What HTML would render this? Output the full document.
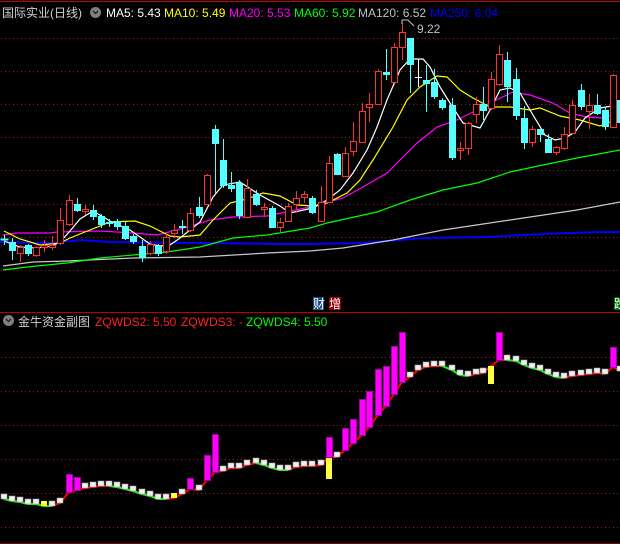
<!DOCTYPE html>
<html><head><meta charset="utf-8"><style>
html,body{margin:0;padding:0;background:#000;width:620px;height:544px;overflow:hidden}
svg{display:block}
text{font-family:"Liberation Sans","Noto Sans CJK SC",sans-serif;font-size:12px}
</style></head><body>
<svg width="620" height="544" viewBox="0 0 620 544" xmlns="http://www.w3.org/2000/svg">
<rect width="620" height="544" fill="#000"/>
<!-- frame lines -->
<line x1="0" y1="1.5" x2="620" y2="1.5" stroke="#c00000" stroke-width="1"/>
<line x1="23.5" y1="0" x2="23.5" y2="2" stroke="#c00000"/>
<line x1="0" y1="312.5" x2="620" y2="312.5" stroke="#c00000"/>
<line x1="0" y1="543.5" x2="620" y2="543.5" stroke="#800000"/>
<!-- grid -->
<g stroke="#a02020" stroke-width="1" stroke-dasharray="1 3">
<line x1="1" y1="38.5" x2="620" y2="38.5"/><line x1="1" y1="71.5" x2="620" y2="71.5"/>
<line x1="1" y1="104.5" x2="620" y2="104.5"/><line x1="1" y1="137.5" x2="620" y2="137.5"/>
<line x1="1" y1="170.5" x2="620" y2="170.5"/><line x1="1" y1="204.5" x2="620" y2="204.5"/>
<line x1="1" y1="237.5" x2="620" y2="237.5"/><line x1="1" y1="270.5" x2="620" y2="270.5"/>
<line x1="1" y1="357.5" x2="620" y2="357.5"/><line x1="1" y1="391.5" x2="620" y2="391.5"/>
<line x1="1" y1="425.5" x2="620" y2="425.5"/><line x1="1" y1="459.5" x2="620" y2="459.5"/>
<line x1="1" y1="493.5" x2="620" y2="493.5"/><line x1="1" y1="527.5" x2="620" y2="527.5"/>
</g>
<!-- moving averages -->
<g fill="none" stroke-width="1.2">
<polyline stroke="#0000ff" stroke-width="2" points="0,242 53,243 80,240 110,242 283,244 310,244 363,243 423,238 487,237 543,234 600,232 620,232"/>
<polyline stroke="#c8c8c8" points="3,266 33,262 67,261 133,258 200,257 267,253 310,251 343,248 393,240 443,230 510,220 577,210 620,202"/>
<polyline stroke="#00ff00" points="3,270 27,267 67,263 100,258 133,255 167,252 200,247 233,238 267,235 310,228 327,223 377,212 410,200 443,190 477,183 510,172 543,165 577,158 620,150"/>
<polyline stroke="#ff00ff" points="3,235 17,233 50,233 57,232 100,231 133,233 157,235 177,230 210,220 233,217 267,216 310,207 343,198 363,187 387,173 400,160 417,143 437,127 457,120 477,110 490,103 513,92 530,95 553,103 570,113 587,117 603,118 620,112"/>
<polyline stroke="#ffff00" points="4,231 20,239 40,245 60,243 70,238 90,230 110,222 135,221 150,226 170,236 180,237 200,235 213,220 230,203 247,199 263,193 280,196 297,205 313,206 327,203 347,193 360,180 373,160 393,127 407,100 420,87 437,76 447,77 460,90 473,98 490,107 510,107 530,110 540,108 560,116 580,120 600,126 615,120 620,118"/>
<polyline stroke="#ffffff" points="4,241 20,247 36,248 52,246 60,242 70,231 80,219 93,211 110,221 130,230 150,244 160,246 170,245 180,238 200,222 213,197 223,185 240,182 260,195 280,206 290,213 313,208 327,200 340,190 353,173 367,150 377,127 387,100 400,70 410,59 423,59 430,67 440,87 450,103 463,123 480,128 490,110 500,90 510,88 520,93 530,110 545,135 555,140 565,138 575,132 585,118 600,108 612,106 620,112"/>
</g>
<!-- candles -->
<g id="cy" fill="#54ffff" stroke="#54ffff" stroke-width="1">
<line x1="4.5" y1="235" x2="4.5" y2="245"/><rect x="1" y="239" width="7" height="1"/>
<line x1="12.5" y1="238" x2="12.5" y2="260"/><rect x="9.5" y="242.5" width="6" height="8"/>
<line x1="28.5" y1="244" x2="28.5" y2="256"/><rect x="25.5" y="245.5" width="6" height="8"/>
<line x1="77.5" y1="198" x2="77.5" y2="212"/><rect x="74.5" y="204.5" width="6" height="6"/>
<line x1="93.5" y1="205" x2="93.5" y2="220"/><rect x="90.5" y="210.5" width="6" height="6"/>
<line x1="101.5" y1="214" x2="101.5" y2="228"/><rect x="98.5" y="216.5" width="6" height="8"/>
<line x1="109.5" y1="219" x2="109.5" y2="227"/><rect x="106.5" y="222.5" width="6" height="1"/>
<line x1="117.5" y1="219" x2="117.5" y2="230"/><rect x="114.5" y="221.5" width="6" height="5"/>
<line x1="125.5" y1="222" x2="125.5" y2="240"/><rect x="122.5" y="226.5" width="6" height="12"/>
<line x1="133.5" y1="234" x2="133.5" y2="244"/><rect x="130.5" y="236.5" width="6" height="5"/>
<line x1="142.5" y1="240" x2="142.5" y2="262"/><rect x="139.5" y="246.5" width="6" height="11"/>
<line x1="158.5" y1="244" x2="158.5" y2="256"/><rect x="155.5" y="246.5" width="6" height="7"/>
<line x1="182.5" y1="220" x2="182.5" y2="234"/><rect x="179.5" y="226.5" width="6" height="1"/>
<line x1="199.5" y1="197" x2="199.5" y2="218"/><rect x="196.5" y="207.5" width="6" height="8"/>
<line x1="215.5" y1="125" x2="215.5" y2="193"/><rect x="212.5" y="129.5" width="6" height="14"/>
<line x1="223.5" y1="139" x2="223.5" y2="188"/><rect x="220.5" y="160.5" width="6" height="25"/>
<line x1="231.5" y1="172" x2="231.5" y2="192"/><rect x="228.5" y="185.5" width="6" height="3"/>
<line x1="239.5" y1="180" x2="239.5" y2="219"/><rect x="236.5" y="183.5" width="6" height="32"/>
<line x1="256.5" y1="190" x2="256.5" y2="206"/><rect x="253.5" y="194.5" width="6" height="10"/>
<line x1="272.5" y1="206" x2="272.5" y2="228"/><rect x="269.5" y="208.5" width="6" height="19"/>
<line x1="312.5" y1="196" x2="312.5" y2="214"/><rect x="309.5" y="198.5" width="6" height="14"/>
<line x1="337.5" y1="153" x2="337.5" y2="175"/><rect x="334.5" y="154.5" width="6" height="20"/>
<line x1="386.5" y1="49" x2="386.5" y2="80"/><rect x="383.5" y="72.5" width="6" height="2"/>
<line x1="410.5" y1="38" x2="410.5" y2="93"/><rect x="407.5" y="38.5" width="6" height="26"/>
<line x1="426.5" y1="65" x2="426.5" y2="112"/><rect x="423.5" y="80.5" width="6" height="3"/>
<line x1="434.5" y1="69" x2="434.5" y2="99"/><rect x="431.5" y="82.5" width="6" height="14"/>
<line x1="442.5" y1="98" x2="442.5" y2="110"/><rect x="439.5" y="100.5" width="6" height="7"/>
<line x1="452.5" y1="98" x2="452.5" y2="160"/><rect x="449.5" y="105.5" width="6" height="52"/>
<line x1="483.5" y1="87" x2="483.5" y2="120"/><rect x="480.5" y="104.5" width="6" height="6"/>
<line x1="507.5" y1="52" x2="507.5" y2="102"/><rect x="504.5" y="60.5" width="6" height="26"/>
<line x1="516.5" y1="68" x2="516.5" y2="120"/><rect x="513.5" y="79.5" width="6" height="36"/>
<line x1="524.5" y1="106" x2="524.5" y2="149"/><rect x="521.5" y="118.5" width="6" height="24"/>
<line x1="540.5" y1="129" x2="540.5" y2="142"/><rect x="537.5" y="129.5" width="6" height="5"/>
<line x1="548.5" y1="134" x2="548.5" y2="153"/><rect x="545.5" y="139.5" width="6" height="13"/>
<line x1="581.5" y1="84" x2="581.5" y2="110"/><rect x="578.5" y="90.5" width="6" height="16"/>
<line x1="597.5" y1="94" x2="597.5" y2="115"/><rect x="594.5" y="105.5" width="6" height="8"/>
<line x1="605.5" y1="107" x2="605.5" y2="130"/><rect x="602.5" y="110.5" width="6" height="16"/>
<line x1="620.5" y1="98" x2="620.5" y2="125"/><rect x="617.5" y="100.5" width="6" height="22"/>
</g>
<g fill="#000" stroke="#ff3232" stroke-width="1">
<line x1="20.5" y1="245" x2="20.5" y2="262"/><rect x="17.5" y="247.5" width="6" height="6"/>
<line x1="36.5" y1="246" x2="36.5" y2="257"/><rect x="33.5" y="247.5" width="6" height="8"/>
<line x1="44.5" y1="240" x2="44.5" y2="252"/><rect x="41.5" y="245.5" width="6" height="2"/>
<line x1="52.5" y1="236" x2="52.5" y2="250"/><rect x="49.5" y="245.5" width="6" height="2"/>
<line x1="60.5" y1="208" x2="60.5" y2="245"/><rect x="57.5" y="220.5" width="6" height="23"/>
<line x1="69.5" y1="195" x2="69.5" y2="226"/><rect x="66.5" y="200.5" width="6" height="24"/>
<line x1="85.5" y1="205" x2="85.5" y2="215"/><rect x="82.5" y="209.5" width="6" height="2"/>
<line x1="150.5" y1="241" x2="150.5" y2="255"/><rect x="147.5" y="244.5" width="6" height="9"/>
<line x1="166.5" y1="233" x2="166.5" y2="254"/><rect x="163.5" y="237.5" width="6" height="14"/>
<line x1="174.5" y1="224" x2="174.5" y2="238"/><rect x="171.5" y="230.5" width="6" height="3"/>
<line x1="190.5" y1="208" x2="190.5" y2="232"/><rect x="187.5" y="213.5" width="6" height="17"/>
<line x1="207.5" y1="174" x2="207.5" y2="205"/><rect x="204.5" y="175.5" width="6" height="29"/>
<line x1="247.5" y1="179" x2="247.5" y2="218"/><rect x="244.5" y="188.5" width="6" height="29"/>
<line x1="264.5" y1="203" x2="264.5" y2="217"/><rect x="261.5" y="207.5" width="6" height="2"/>
<line x1="280.5" y1="218" x2="280.5" y2="232"/><rect x="277.5" y="222.5" width="6" height="5"/>
<line x1="288.5" y1="203" x2="288.5" y2="222"/><rect x="285.5" y="206.5" width="6" height="15"/>
<line x1="296.5" y1="191" x2="296.5" y2="213"/><rect x="293.5" y="198.5" width="6" height="6"/>
<line x1="304.5" y1="191" x2="304.5" y2="203"/><rect x="301.5" y="194.5" width="6" height="3"/>
<line x1="321.5" y1="186" x2="321.5" y2="222"/><rect x="318.5" y="202.5" width="6" height="19"/>
<line x1="329.5" y1="156" x2="329.5" y2="203"/><rect x="326.5" y="163.5" width="6" height="39"/>
<line x1="345.5" y1="147" x2="345.5" y2="177"/><rect x="342.5" y="153.5" width="6" height="23"/>
<line x1="353.5" y1="122" x2="353.5" y2="156"/><rect x="350.5" y="141.5" width="6" height="10"/>
<line x1="362.5" y1="103" x2="362.5" y2="143"/><rect x="359.5" y="111.5" width="6" height="31"/>
<line x1="369.5" y1="93" x2="369.5" y2="122"/><rect x="366.5" y="104.5" width="6" height="3"/>
<line x1="378.5" y1="69" x2="378.5" y2="105"/><rect x="375.5" y="71.5" width="6" height="33"/>
<line x1="394.5" y1="43" x2="394.5" y2="83"/><rect x="391.5" y="47.5" width="6" height="35"/>
<line x1="402.5" y1="23" x2="402.5" y2="60"/><rect x="399.5" y="32.5" width="6" height="15"/>
<line x1="460.5" y1="142" x2="460.5" y2="160"/><rect x="457.5" y="148.5" width="6" height="2"/>
<line x1="468.5" y1="122" x2="468.5" y2="155"/><rect x="465.5" y="123.5" width="6" height="25"/>
<line x1="476.5" y1="97" x2="476.5" y2="123"/><rect x="473.5" y="104.5" width="6" height="10"/>
<line x1="491.5" y1="72" x2="491.5" y2="110"/><rect x="488.5" y="79.5" width="6" height="29"/>
<line x1="499.5" y1="45" x2="499.5" y2="86"/><rect x="496.5" y="54.5" width="6" height="30"/>
<line x1="532.5" y1="126" x2="532.5" y2="147"/><rect x="529.5" y="129.5" width="6" height="13"/>
<line x1="556.5" y1="146" x2="556.5" y2="155"/><rect x="553.5" y="147.5" width="6" height="5"/>
<line x1="564.5" y1="127" x2="564.5" y2="150"/><rect x="561.5" y="134.5" width="6" height="14"/>
<line x1="572.5" y1="100" x2="572.5" y2="134"/><rect x="569.5" y="105.5" width="6" height="28"/>
<line x1="589.5" y1="94" x2="589.5" y2="129"/><rect x="586.5" y="105.5" width="6" height="6"/>
<line x1="613.5" y1="74" x2="613.5" y2="128"/><rect x="610.5" y="75.5" width="6" height="52"/>
</g>
<g stroke="#fff"><line x1="418.5" y1="59" x2="418.5" y2="87"/><line x1="415" y1="77.5" x2="422" y2="77.5"/></g>
<!-- high marker -->
<polyline points="402,24 402,20 408,20 414,26" fill="none" stroke="#c0c0c0"/>
<text x="417" y="33" fill="#c0c0c0">9.22</text>
<!-- header -->
<text x="2" y="17" fill="#d0d0d0" font-size="13">国际实业(日线)</text>
<circle cx="95.5" cy="12.5" r="5.5" fill="#808080"/><polyline points="93,11 95.5,13.5 98,11" fill="none" stroke="#202020" stroke-width="1.3"/>
<text x="106" y="17" fill="#ffffff">MA5: 5.43</text>
<text x="164" y="17" fill="#ffff00">MA10: 5.49</text>
<text x="229" y="17" fill="#ff00ff">MA20: 5.53</text>
<text x="294" y="17" fill="#00ff00">MA60: 5.92</text>
<text x="358" y="17" fill="#c0c0c0">MA120: 6.52</text>
<text x="430" y="17" fill="#0000ff">MA250: 6.04</text>
<!-- badges -->
<rect x="313" y="297" width="11" height="13" fill="#1a4a80"/><text x="313" y="308" fill="#fff" font-size="11">财</text>
<rect x="329" y="297" width="12" height="13" fill="#900000"/><text x="329" y="308" fill="#fff" font-size="11">增</text>
<rect x="614" y="297" width="8" height="13" fill="#007000"/><text x="614" y="308" fill="#fff" font-size="11">跌</text>
<!-- sub header -->
<circle cx="8.5" cy="320.5" r="5.5" fill="#808080"/><polyline points="6,319 8.5,321.5 11,319" fill="none" stroke="#202020" stroke-width="1.3"/>
<text x="18" y="326" fill="#d0d0d0" font-size="13">金牛资金副图</text>
<text x="95" y="326" fill="#ff2020">ZQWDS2: 5.50</text>
<text x="181" y="326" fill="#ff2020">ZQWDS3: -</text>
<text x="246" y="326" fill="#00ff00">ZQWDS4: 5.50</text>
<!-- sub line -->
<polyline fill="none" stroke="#ff0000" stroke-width="2" points="4,499 12,501 20,502 28,504 36,504 44,506 52,506 60,503 69,492 77,490 85,488 93,487 101,486 109,486 117,487 125,489 133,491 142,494 150,496 158,499 166,499 174,498 182,494 190,489 199,490 207,480 215,472 223,471 231,468 239,468 247,465 256,463 264,465 272,468 280,470 288,470 296,467 304,466 312,466 321,465 329,457 337,457 345,450 353,443 362,435 369,427 378,415 386,406 394,394 402,382 410,377 418,370 426,367 434,366 442,366 452,370 460,375 468,376 476,374 483,373 491,366 499,360 507,360 516,361 524,365 532,368 540,370 548,374 556,377 564,378 572,376 581,375 589,374 597,373 605,374 613,367 620,371"/>
<g fill="none" stroke="#00ff00" stroke-width="2">
<polyline points="4,499 12,501 20,502 28,504 36,504 44,506 52,506"/>
<polyline points="109,486 117,487 125,489 133,491 142,494 150,496 158,499 166,499"/>
<polyline points="256,463 264,465 272,468 280,470 288,470"/>
<polyline points="442,366 452,370 460,375 468,376"/>
<polyline points="507,360 516,361 524,365 532,368 540,370 548,374 556,377 564,378"/>
</g>
<!-- squares -->
<g fill="#f0f0f0" stroke="#a0a0a0" stroke-width="0.6">
<rect x="1" y="494" width="6" height="5"/><rect x="9" y="496" width="6" height="5"/><rect x="17" y="497" width="6" height="5"/><rect x="25" y="499" width="6" height="5"/><rect x="33" y="499" width="6" height="5"/><rect x="49" y="501" width="6" height="5"/><rect x="57" y="498" width="6" height="5"/>
<rect x="82" y="483" width="6" height="5"/><rect x="90" y="482" width="6" height="5"/><rect x="98" y="481" width="6" height="5"/><rect x="106" y="481" width="6" height="5"/><rect x="114" y="482" width="6" height="5"/><rect x="122" y="484" width="6" height="5"/><rect x="130" y="486" width="6" height="5"/><rect x="139" y="489" width="6" height="5"/><rect x="147" y="491" width="6" height="5"/><rect x="155" y="494" width="6" height="5"/><rect x="163" y="494" width="6" height="5"/><rect x="179" y="489" width="6" height="5"/><rect x="196" y="485" width="6" height="5"/>
<rect x="220" y="466" width="6" height="5"/><rect x="228" y="463" width="6" height="5"/><rect x="236" y="463" width="6" height="5"/><rect x="244" y="460" width="6" height="5"/><rect x="253" y="458" width="6" height="5"/><rect x="261" y="460" width="6" height="5"/><rect x="269" y="463" width="6" height="5"/><rect x="277" y="465" width="6" height="5"/><rect x="285" y="465" width="6" height="5"/><rect x="293" y="462" width="6" height="5"/><rect x="301" y="461" width="6" height="5"/><rect x="309" y="461" width="6" height="5"/><rect x="318" y="460" width="6" height="5"/><rect x="334" y="452" width="6" height="5"/>
<rect x="407" y="372" width="6" height="5"/><rect x="415" y="365" width="6" height="5"/><rect x="423" y="362" width="6" height="5"/><rect x="431" y="361" width="6" height="5"/><rect x="439" y="361" width="6" height="5"/><rect x="449" y="365" width="6" height="5"/><rect x="457" y="370" width="6" height="5"/><rect x="465" y="371" width="6" height="5"/><rect x="473" y="369" width="6" height="5"/><rect x="480" y="368" width="6" height="5"/>
<rect x="504" y="355" width="6" height="5"/><rect x="513" y="356" width="6" height="5"/><rect x="521" y="360" width="6" height="5"/><rect x="529" y="363" width="6" height="5"/><rect x="537" y="365" width="6" height="5"/><rect x="545" y="369" width="6" height="5"/><rect x="553" y="372" width="6" height="5"/><rect x="561" y="373" width="6" height="5"/><rect x="569" y="371" width="6" height="5"/><rect x="578" y="370" width="6" height="5"/><rect x="586" y="369" width="6" height="5"/><rect x="594" y="368" width="6" height="5"/><rect x="602" y="369" width="6" height="5"/><rect x="617" y="366" width="6" height="5"/>
</g>
<!-- yellow -->
<g fill="#ffff40">
<rect x="41" y="501" width="6" height="5"/><rect x="171" y="493" width="6" height="5"/>
<rect x="326" y="457" width="6" height="22"/><rect x="488" y="366" width="6" height="18"/>
</g>
<!-- magenta bars -->
<g fill="#ff00ff" stroke="#a000a0" stroke-width="1">
<rect x="66.5" y="474.5" width="6" height="18"/><rect x="74.5" y="477.5" width="6" height="13"/>
<rect x="187.5" y="478.5" width="6" height="11"/><rect x="204.5" y="455.5" width="6" height="25"/><rect x="212.5" y="434.5" width="6" height="38"/>
<rect x="326.5" y="437.5" width="6" height="20"/><rect x="342.5" y="428.5" width="6" height="22"/><rect x="350.5" y="419.5" width="6" height="24"/><rect x="359.5" y="399.5" width="6" height="36"/><rect x="366.5" y="391.5" width="6" height="36"/><rect x="375.5" y="369.5" width="6" height="46"/><rect x="383.5" y="366.5" width="6" height="40"/><rect x="391.5" y="346.5" width="6" height="48"/><rect x="399.5" y="332.5" width="6" height="50"/>
<rect x="496.5" y="332.5" width="6" height="28"/><rect x="610.5" y="347.5" width="6" height="20"/>
</g>
</svg>
</body></html>
